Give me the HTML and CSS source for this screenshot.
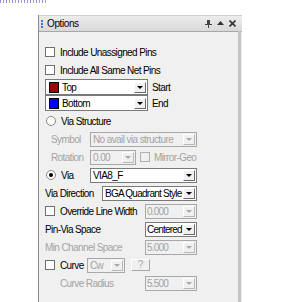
FILE: index.html
```html
<!DOCTYPE html>
<html lang="en">
<head>
    <meta charset="UTF-8">
    <meta name="viewport" content="width=device-width, initial-scale=1.0">
    <title>Options</title>
    <link rel="stylesheet" href="styles.css">
</head>
<body>
    <div class="strip"></div>
    <div class="panel">
        <div class="titlebar">
            <span class="grip"></span>
            <span class="title">Options</span>
            <span class="tools">
                <svg width="7" height="8" viewBox="0 0 7 8"><path d="M2 0h3v4h2v1H4v3H3V5H0V4h2z" fill="#444"/></svg>
                <svg width="7" height="5" viewBox="0 0 7 5"><path d="M0 4L3.5 0 7 4z" fill="#333"/></svg>
                <svg width="7" height="7" viewBox="0 0 7 7"><path d="M0.5 0.5l6 6M6.5 0.5l-6 6" stroke="#333" stroke-width="1.6"/></svg>
            </span>
        </div>
        <div class="content">
            <div class="row first">
                <span class="check"></span>
                <span class="label">Include Unassigned Pins</span>
            </div>
            <div class="row">
                <span class="check"></span>
                <span class="label">Include All Same Net Pins</span>
            </div>
            <div class="row tight">
                <div class="combo layer"><span class="swatch red"></span><span class="val">Top</span><span class="arrow"></span></div>
                <span class="label side">Start</span>
            </div>
            <div class="row tight">
                <div class="combo layer"><span class="swatch blue"></span><span class="val">Bottom</span><span class="arrow"></span></div>
                <span class="label side">End</span>
            </div>
            <div class="row short">
                <span class="radio"></span>
                <span class="label">Via Structure</span>
            </div>
            <div class="row">
                <span class="label off lab-sym">Symbol</span>
                <div class="combo off wide"><span class="val">No avail via structure</span><span class="arrow"></span></div>
            </div>
            <div class="row">
                <span class="label off lab-sym">Rotation</span>
                <div class="combo off rot"><span class="val">0.00</span><span class="arrow"></span></div>
                <span class="check off mirror"></span>
                <span class="label off">Mirror-Geo</span>
            </div>
            <div class="row">
                <span class="radio on"></span>
                <span class="label lab-via">Via</span>
                <div class="combo wide"><span class="val">VIA8_F</span><span class="arrow"></span></div>
            </div>
            <div class="row">
                <span class="label">Via Direction</span>
                <div class="combo dir"><span class="val">BGA Quadrant Style</span><span class="arrow"></span></div>
            </div>
            <div class="row">
                <span class="check"></span>
                <span class="label">Override Line Width</span>
                <div class="combo off num"><span class="val">0.000</span><span class="arrow"></span></div>
            </div>
            <div class="row">
                <span class="label">Pin-Via Space</span>
                <div class="combo num"><span class="val">Centered</span><span class="arrow"></span></div>
            </div>
            <div class="row">
                <span class="label off">Min Channel Space</span>
                <div class="combo off num"><span class="val">5.000</span><span class="arrow"></span></div>
            </div>
            <div class="row">
                <span class="check"></span>
                <span class="label lab-curve">Curve</span>
                <div class="combo off cw"><span class="val">Cw</span><span class="arrow"></span></div>
                <span class="qbtn">?</span>
            </div>
            <div class="row">
                <span class="label off indent">Curve Radius</span>
                <div class="combo off num"><span class="val">5.500</span><span class="arrow"></span></div>
            </div>
        </div>
    </div>
</body>
</html>
```

FILE: styles.css
```css
body {
    margin: 0;
    background: #fff;
    font-family: 'Liberation Sans', Arial, sans-serif;
    font-size: 10px;
    color: #000;
    width: 282px;
    height: 302px;
    overflow: hidden;
}
.strip {
    width: 48px;
    height: 3px;
    background: repeating-linear-gradient(90deg, #8a94b8 0 1px, #fff 1px 3px, #c8a060 3px 4px, #fff 4px 6px);
}
.panel {
    margin: 12px 0 0 38px;
    width: 204px;
    height: 287px;
    background: #f0f0f0;
    border-left: 1px solid #8c8c8c;
    box-sizing: border-box;
    position: relative;
}
.panel::after {
    content: "";
    position: absolute;
    top: 16px;
    right: 1px;
    bottom: 0;
    width: 3px;
    background: #c4c4c4;
}
.titlebar {
    height: 17px;
    display: flex;
    align-items: center;
    background: linear-gradient(#ececec, #d9d9d9);
    border-top: 1px solid #cfcfcf;
    border-bottom: 1px solid #a8a8a8;
    box-sizing: border-box;
}
.grip {
    width: 2px;
    height: 8px;
    margin: 0 4px 0 2px;
    background: repeating-linear-gradient(#3c78d8 0 2px, transparent 2px 3px);
}
.title {
    flex: 1;
    letter-spacing: -0.4px;
}
.tools {
    display: flex;
    align-items: center;
    gap: 5px;
    margin-right: 6px;
}
.content {
    padding: 11px 0 0 6px;
    width: 152px;
}
.row {
    display: flex;
    align-items: center;
    height: 18px;
}
.row.tight {
    height: 16px;
}
.row.short {
    height: 18px;
    margin-top: 1px;
}
.label {
    white-space: nowrap;
    letter-spacing: -0.6px;
}
.label.off {
    color: #a3a3a3;
}
.label.side {
    margin-left: 4px;
}
.lab-sym {
    width: 39px;
    margin-left: 6px;
}
.lab-via {
    width: 30px;
}
.lab-curve {
    width: 27px;
}
.indent {
    margin-left: 15px;
}
.check {
    width: 8px;
    height: 8px;
    border: 1px solid #6f6f6f;
    background: #fff;
    margin-right: 5px;
    flex: none;
}
.check.off {
    border-color: #b0b0b0;
    background: #f0f0f0;
}
.check.mirror {
    margin-left: 4px;
    margin-right: 4px;
}
.radio {
    width: 8px;
    height: 8px;
    border: 1px solid #8a8a8a;
    border-radius: 50%;
    background: #fff;
    margin: 0 5px 0 1px;
    flex: none;
    position: relative;
}
.radio.on::after {
    content: "";
    position: absolute;
    left: 2px;
    top: 2px;
    width: 4px;
    height: 4px;
    border-radius: 50%;
    background: #000;
}
.combo {
    display: flex;
    align-items: center;
    height: 15px;
    box-sizing: border-box;
    border: 1px solid #7a7a7a;
    background: #fff;
    padding: 1px;
    flex: none;
}
.combo.off {
    border-color: #a8a8a8;
    background: #f0f0f0;
    color: #a3a3a3;
}
.combo .val {
    flex: 1;
    padding-left: 1px;
    white-space: nowrap;
    overflow: hidden;
    letter-spacing: -0.6px;
}
.arrow {
    width: 12px;
    height: 11px;
    box-sizing: border-box;
    background: #f0f0f0;
    border: 1px solid;
    border-color: #fff #6a6a6a #6a6a6a #fff;
    position: relative;
    flex: none;
}
.arrow::after {
    content: "";
    position: absolute;
    left: 2px;
    top: 3px;
    border-left: 3px solid transparent;
    border-right: 3px solid transparent;
    border-top: 3px solid #000;
}
.combo.off .arrow {
    border-color: #fff #b8b8b8 #b8b8b8 #fff;
}
.combo.off .arrow::after {
    border-top-color: #a8a8a8;
}
.combo.layer {
    width: 103px;
    height: 16px;
}
.combo.layer .val {
    padding-left: 3px;
}
.swatch {
    width: 8px;
    height: 9px;
    border: 1px solid #000;
    margin-left: 2px;
    flex: none;
}
.swatch.red {
    background: #a00000;
}
.swatch.blue {
    background: #0000ff;
}
.combo.wide {
    width: 107px;
    margin-left: auto;
}
.combo.rot {
    width: 46px;
}
.combo.dir {
    width: 95px;
    margin-left: auto;
}
.combo.dir .val {
    letter-spacing: -0.75px;
}
.combo.num {
    width: 52px;
    margin-left: auto;
}
.combo.num .val {
    padding-left: 0;
    letter-spacing: -0.8px;
}
.combo.cw {
    width: 38px;
}
.qbtn {
    width: 19px;
    height: 12px;
    box-sizing: border-box;
    margin-left: 6px;
    border: 1px solid;
    border-color: #fff #a8a8a8 #a8a8a8 #fff;
    color: #a8a8a8;
    text-align: center;
    line-height: 10px;
}
```
